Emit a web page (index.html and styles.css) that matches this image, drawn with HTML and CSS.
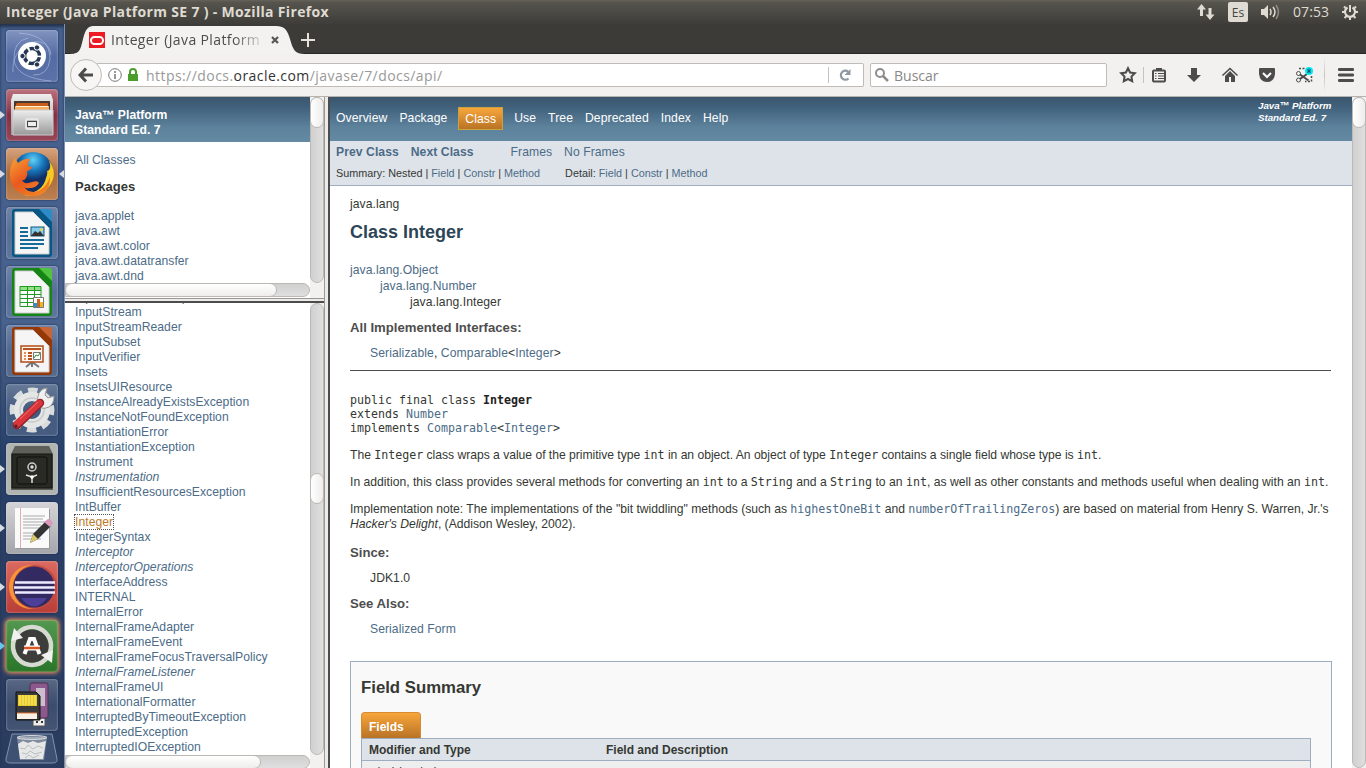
FILE: index.html
```html
<!DOCTYPE html>
<html lang="es">
<head>
<meta charset="utf-8">
<title>Integer (Java Platform SE 7 )</title>
<link rel="stylesheet" href="styles.css">
</head>
<body>
<div class="desktop">
<header class="panel">
  <span class="title">Integer (Java Platform SE 7 ) - Mozilla Firefox</span>
  <div class="tray">
    <svg width="20" height="20" viewBox="0 0 20 20"><path d="M5.500 2 10 7.500H7V14H4V7.500H1zM14 18l-4.500-5.500h3V6h3v6.500h3z" fill="#dfdbd2"/></svg>
    <span class="kbd">Es</span>
    <svg class="vol" width="21" height="20" viewBox="0 0 21 20"><path d="M1 7h3l4-4v14l-4-4H1z" fill="#dfdbd2"/><g fill="none" stroke="#dfdbd2" stroke-width="1.500"><path d="M10 7q2 3 0 6M13 5q4 5 0 10"/><path d="M16 3q5 7 0 14" opacity=".45"/></g></svg>
    <span class="clock">07:53</span>
    <svg class="gear" width="18" height="20" viewBox="0 0 18 20"><g fill="none" stroke="#dfdbd2"><path d="M6.500 5.500a5 5 0 1 0 5 0" stroke-width="2.200"/><path d="M9 3v7" stroke-width="2"/><path d="M4.500 6 3 4.500M13.500 6 15 4.500M4 10H1M14 10h3M5.500 14 3.500 16M12.500 14l2 2M9 15v3" stroke-width="2"/></g></svg>
  </div>
</header>
<div class="workspace">
<nav class="launcher">
  <div class="tile dash"><svg viewBox="0 0 52 52"><g fill="none" stroke="#c4d0ec" opacity=".5"><path d="M7 42C5 10 43 2 45 25M13 3q31 2 31 26Q42 46 27 45M45 51Q10 48 8 30 7 11 22 8"/></g><circle cx="26" cy="26" r="14" fill="#fff"/><circle cx="26" cy="26" r="7.500" fill="none" stroke="#253653" stroke-width="3.500" stroke-dasharray="13.700 2" transform="rotate(10 26 26)"/><g fill="#253653" stroke="#fff"><circle cx="16.500" cy="26" r="2.700"/><circle cx="31" cy="17.500" r="2.700"/><circle cx="31" cy="34.500" r="2.700"/></g></svg></div>
  <div class="tile files run"><svg viewBox="0 0 52 52"><defs><linearGradient id="metal" x2="0" y2="1"><stop stop-color="#eee"/><stop offset="1" stop-color="#999"/></linearGradient></defs><path d="M7 5h38l2 6v35H5V11z" fill="url(#metal)"/><path d="M8 12h36v10H8z" fill="#48392e"/><path d="M11 14h31v8H10v-7z" fill="#c95b1d"/><path d="M9 17h34v4H9z" fill="#f5ae62"/><path d="M10 17h32v1H10z" fill="#fff2d0"/><path d="M7 21h40v25H7z" fill="url(#metal)" stroke="#ccc"/><rect x="20" y="30" width="12" height="10" rx="2" fill="#bbb" stroke="#e6e6e6" stroke-width="2"/><rect x="21.500" y="32.500" width="9" height="5" fill="#eee" stroke="#444"/></svg></div>
  <div class="tile fox run active"><svg viewBox="0 0 52 52"><defs><radialGradient id="globe" cx=".5" cy=".2"><stop stop-color="#60d2fa"/><stop offset=".55" stop-color="#1674b9"/><stop offset="1" stop-color="#112e65"/></radialGradient><linearGradient id="fur" x2=".8" y2="1"><stop stop-color="#f8a136"/><stop offset=".5" stop-color="#e9591f"/><stop offset="1" stop-color="#f38524"/></linearGradient></defs><circle cx="27" cy="24" r="20" fill="url(#globe)"/><path d="M41 10q12 14 3 27-8 13-26 10 19-3 22-17 2-5 1-7 4-1 3-7-1-4-3-6z" fill="#f8ca21"/><path d="M9 10q2 3 3 5 7-5 12-4-2 5-2 7l4 1q-1 3-5 4 1 4-1 7-2 3-4 2 2 5 10 2 6-2 7 1-3 5-9 5-4 1-6-1 6 8 16 3 7-4 10-13Q44 48 27 48 6 47 4 29 3 18 9 10z" fill="url(#fur)"/></svg></div>
  <div class="tile"><svg viewBox="0 0 52 52"><path d="M9 2h29l8 8v37q0 3-3 3H9q-3 0-3-3V5q0-3 3-3z" fill="#075684"/><path d="M33 2h10q3 0 3 3v10z" fill="#2e8bc5"/><path d="M9 5h18l16 16v26H9z" fill="#f5f5f5" stroke="#ccc"/><g stroke="#176b9b" stroke-width="2"><path d="M14 21h8M14 25h8M14 29h8M14 33h24M14 37h24M14 41h18"/></g><rect x="25" y="20" width="13" height="9" fill="#86cce8" stroke="#075684"/><path d="m25 29 4-5 3 2 2-2 4 5z" fill="#333"/><circle cx="35.500" cy="22.500" r="1.500" fill="#f3d447"/></svg></div>
  <div class="tile"><svg viewBox="0 0 52 52"><path d="M9 2h29l8 8v37q0 3-3 3H9q-3 0-3-3V5q0-3 3-3z" fill="#158516"/><path d="M33 2h10q3 0 3 3v10z" fill="#50c43e"/><path d="M9 5h18l16 16v26H9z" fill="#f5f5f5" stroke="#ccc"/><path d="M14 20h21v21H14z" fill="#fff"/><path d="M14 20h21v5H14z" fill="#92e184"/><path d="M14 20.500h21v20H14zM14 24.500h21M14 28.500h21M14 32.500h21M14 36.500h21M21.500 20v21M28.500 20v21" stroke="#1d9b20" fill="none"/><path d="M27.500 31.500h10v10h-10z" fill="#fff" stroke="#777"/><path d="M28 37h3v4h-3z" fill="#2292d0"/><path d="M31 33h3v8h-3z" fill="#cd641c"/><path d="M34 36h3v5h-3z" fill="#efb624"/></svg></div>
  <div class="tile"><svg viewBox="0 0 52 52"><path d="M9 2h29l8 8v37q0 3-3 3H9q-3 0-3-3V5q0-3 3-3z" fill="#943807"/><path d="M33 2h10q3 0 3 3v10z" fill="#c96535"/><path d="M9 5h18l16 16v26H9z" fill="#f5f5f5" stroke="#ccc"/><path d="M20 42l6-5 7 5M26 36v6" stroke="#777" stroke-width="2" fill="none"/><path d="M15 21h22v16H15z" fill="#fff6ed" stroke="#b34b18" stroke-width="1.500"/><path d="M17 24h18M22 28h4M22 31h4M22 34h4" stroke="#ba501d" stroke-width="2"/><path d="M18 28h2M18 31h2M18 34h2" stroke="#e68c57" stroke-width="2"/><path d="M27.500 27.500h7v7h-7z" fill="#fff" stroke="#777"/><path d="m28 33 2-3 2 1 2-3" stroke="#2c8c35" fill="none"/></svg></div>
  <div class="tile"><svg viewBox="0 0 52 52"><circle cx="26" cy="26" r="19" fill="none" stroke="#d9dcdd" stroke-width="7" stroke-dasharray="9 5.920" transform="rotate(-13 26 26)"/><circle cx="26" cy="26" r="13.500" fill="none" stroke="#e4e5e5" stroke-width="9"/><circle cx="26" cy="26" r="12" fill="none" stroke="#c7caca" stroke-width="1.500"/><path d="M33 20q-3-6 0-11 3-5 8-5l-2 7 3 3 6-2q0 8-5 11-4 2-8 1z" fill="#f0f0f0" stroke="#999"/><path d="M34 19 11 41" stroke="#8d2229" stroke-width="8.500" stroke-linecap="round"/><path d="M33.500 19 11 40" stroke="#d9353b" stroke-width="6.500" stroke-linecap="round"/><path d="M32 18 14 35" stroke="#ef7474"/><circle cx="10" cy="42" r="1.500" fill="#5e1c24"/></svg></div>
  <div class="tile safe run"><svg viewBox="0 0 52 52"><path d="m9 3-4 8v36h42V11l-4-8z" fill="#5f5f5a"/><path d="M6 11h40v34H6z" fill="#292924" stroke="#151512"/><rect x="11" y="14" width="30" height="27" rx="2" fill="#2b2b26" stroke="#0e0e0d"/><circle cx="26" cy="24" r="4" fill="none" stroke="#ccc" stroke-width="1.500"/><circle cx="26" cy="24" r="1.700" fill="#ddd"/><path d="m20 32 6 2 5-2M26 34v6" stroke="#ddd" stroke-width="1.500" fill="none"/><circle cx="26" cy="34" r="1.800" fill="#fff"/></svg></div>
  <div class="tile edit run"><svg viewBox="0 0 52 52"><path d="M10 7h34v40H10z" fill="#999"/><path d="M9 6h34v40H9z" fill="#fafafa"/><path d="M14.500 6v40" stroke="#e7acac"/><path d="M17 14h22M17 17h20M17 20h22M17 23h18M17 26h21M17 31h18M17 34h15M17 37h18" stroke="#aaa"/><path d="m24 41 3-9 13-13 5 5-13 13z" fill="#343434"/><path d="m24 41 3-9 5 5z" fill="#d8c86b"/><path d="m38 20 4-3q3 0 5 4l-3 4z" fill="#d899bb"/></svg></div>
  <div class="tile eclipse run"><svg viewBox="0 0 52 52"><circle cx="25" cy="26" r="22" fill="#f59535"/><circle cx="29" cy="26" r="22" fill="#c14b42"/><circle cx="28" cy="26" r="20.500" fill="#332a61"/><path d="M15 37q13 17 26 0z" fill="#4b3f98"/><path d="M9 21.500h40M8 26.500h41M9 31.500h40" stroke="#eeeaff" stroke-width="2.500"/></svg></div>
  <div class="tile update run cyan"><svg viewBox="0 0 52 52"><circle cx="26" cy="26" r="19" fill="none" stroke="#d8d9d3" stroke-width="4.500"/><circle cx="26" cy="26" r="16.500" fill="#3d3e3b"/><path d="m18.500 34 5.500-15h4l5.500 15M20 28h12" fill="none" stroke="#fff" stroke-width="4"/><path d="M18 28h16" stroke="#fff" stroke-width="5"/><path d="M18 28h16" stroke="#dd5725" stroke-width="2.500"/><path d="m5 21 3-13 9 10zM35 35l12-5-1 13z" fill="#f1f1ef"/></svg></div>
  <div class="tile"><svg viewBox="0 0 52 52"><path d="M27 39h12v8H27z" fill="#eee" stroke="#555"/><path d="M30 43h2M35 43h2" stroke="#333" stroke-width="2"/><rect x="24" y="4" width="18" height="35" rx="2" fill="#8c588d" stroke="#4d3251"/><path d="M30 9h9v18h-9z" fill="#ccbdcc"/><path d="M10 13h20l4 4v24H10z" fill="#3a3a3a" stroke="#111"/><path d="M12 16h19v11H12z" fill="#e7cb2e"/><path d="M14 16v10M17 16v10M20 16v10M23 16v10M26 16v10M29 16v10" stroke="#fff175"/><path d="M11 34h20v6H11z" fill="#f8f2e6"/><path d="M11 34h20" stroke="#e37533"/></svg></div>
  <div class="trash"><svg width="58" height="32" viewBox="0 0 58 32"><path d="M9 1h40l5 25q1 4-5 4H8q-6 0-5-4z" fill="#65779b" fill-opacity=".35" stroke="#8190ad"/><path d="M14 4h30l-3 23H17z" fill="#cbd0d3" fill-opacity=".45"/><path d="m15 11 5-3 5 2 5-2 5 2 8-2-3 18H17z" fill="#e5e8e6"/><path d="m17 15 5 1 3-4 5 4 5-3 5 2M19 20l5 1 3-3 5 3 7-2M22 25l4-3 4 3 6-3" fill="none" stroke="#b9bebf"/><ellipse cx="29" cy="4.500" rx="15" ry="2" fill="#ddd" fill-opacity=".4" stroke="#d5dadd"/></svg></div>
</nav>
<main class="browser">
  <div class="tabs">
    <svg class="tabshape" width="240" height="30" viewBox="0 0 240 30"><path d="M0 30c12 0 12-3 15-15C18 4 20 2 27 2h181c8 0 11 3 14 13 3 11 5 15 15 15z" fill="#f3f2f1"/></svg>
    <div class="tabtext"><svg width="16" height="16" viewBox="0 0 16 16"><path fill="#ed1c24" d="M0 0h16v16H0z"/><rect x="2" y="5" width="12" height="7" rx="3.500" fill="none" stroke="#fff" stroke-width="2"/></svg><span class="tabname">Integer (Java Platform</span><svg class="close" width="8" height="8" viewBox="0 0 8 8"><path d="m1 1 6 6M7 1 1 7" stroke="#555" stroke-width="2.200"/></svg></div>
    <svg class="plus" width="14" height="14" viewBox="0 0 14 14"><path d="M7 0v14M0 7h14" stroke="#e5e2d9" stroke-width="2"/></svg>
  </div>
  <div class="toolbar">
    <div class="back"><svg width="16" height="16" viewBox="0 0 16 16"><path d="m8 1.500-6 6.500 6 6.500M2 8h13" fill="none" stroke="#4c4c4c" stroke-width="3"/></svg></div>
    <div class="url"><svg width="14" height="14" viewBox="0 0 14 14"><circle cx="7" cy="7" r="6.300" fill="none" stroke="#777"/><path d="M7 6v5M7 3v2" stroke="#777" stroke-width="1.500"/></svg><svg width="10" height="14" viewBox="0 0 10 14"><path d="M2 7V4q0-3 3-3t3 3v3" fill="none" stroke="#4b9d2c" stroke-width="2"/><path d="M0 6h10v7H0z" fill="#4b9d2c"/></svg><span class="address">https://docs.<b>oracle.com</b>/javase/7/docs/api/</span><i class="sep"></i><svg class="reload" width="12" height="14" viewBox="0 0 12 14"><path d="M9.500 10.500a4.500 4.500 0 1 1-.5-7" fill="none" stroke="#8e99a3" stroke-width="2.300"/><path d="M11.500 1v6h-6z" fill="#8e99a3"/></svg></div>
    <div class="search"><svg width="14" height="14" viewBox="0 0 14 14"><circle cx="5" cy="5" r="4" fill="none" stroke="#8d8d8d" stroke-width="2"/><path d="m8 8 5 5" stroke="#8d8d8d" stroke-width="2.500"/></svg><span>Buscar</span></div>
    <div class="actions">
      <svg width="18" height="18" viewBox="0 0 18 18"><path d="m9 2.200 2.100 4.300 4.700.7-3.400 3.300.8 4.700L9 13l-4.200 2.200.8-4.700-3.400-3.300 4.700-.7z" fill="none" stroke="#4c4c4c" stroke-width="2"/></svg>
      <i class="sep"></i>
      <svg width="16" height="18" viewBox="0 0 16 18"><path d="M5 4V2h6v2z" fill="#4c4c4c"/><rect x="2" y="4.500" width="12" height="11" rx="1" fill="none" stroke="#4c4c4c" stroke-width="2"/><path d="M4 7.500h1.500M7 7.500h6M4 10h1.500M7 10h6M4 12.500h1.500M7 12.500h6" stroke="#4c4c4c"/></svg>
      <svg width="16" height="18" viewBox="0 0 16 18"><path d="M5 2h6v7h4l-7 7-7-7h4z" fill="#4c4c4c"/></svg>
      <svg width="18" height="18" viewBox="0 0 18 18"><path d="m1.500 9.500 7.500-7 7.500 7" fill="none" stroke="#4c4c4c" stroke-width="1.600"/><path d="m4 10 5-5 5 5v6h-4v-5H8v5H4z" fill="#4c4c4c"/></svg>
      <svg width="18" height="18" viewBox="0 0 18 18"><path d="M1 3q0-1 1-1h14q1 0 1 1v5q-1 8-8 8T1 8z" fill="#4c4c4c"/><path d="m5 7 4 4 4-4" fill="none" stroke="#fff" stroke-width="2"/></svg>
      <svg width="18" height="18" viewBox="0 0 18 18"><path d="M4 2.500h7M16.500 10v5.500H10" fill="none" stroke="#4c4c4c" stroke-width="1.500" stroke-dasharray="2 1.500"/><path d="M5 8.500l8.500 6M5 13l7-5" stroke="#4c4c4c" stroke-width="2"/><circle cx="3.500" cy="7.500" r="2" fill="none" stroke="#4c4c4c"/><circle cx="3.500" cy="14" r="2" fill="none" stroke="#4c4c4c"/><circle cx="14" cy="5" r="4" fill="#00e9f4"/><path d="M14 2.500v5M12 3.500l4 3M16 3.500l-4 3" stroke="#174e60"/></svg>
    </div>
    <i class="divider"></i>
    <svg class="menu" width="16" height="14" viewBox="0 0 16 14"><path d="M1.200 1.500h13.600M1.200 7h13.600M1.200 12.500h13.600" stroke="#4c4c4c" stroke-width="2.800" stroke-linecap="round"/></svg>
  </div>
  <div class="frames">
    <section class="left">
      <div class="packages">
        <div class="framebody">
          <div class="brand">Java™ Platform<br>Standard Ed. 7</div>
          <div class="pkg"><a class="all">All Classes</a><h2>Packages</h2><a>java.applet</a><a>java.awt</a><a>java.awt.color</a><a>java.awt.datatransfer</a><a>java.awt.dnd</a></div>
          <div class="hbar"><div class="thumb first"></div></div>
        </div>
        <div class="vcol"><div class="vbar"><div class="thumb topthumb"></div></div></div>
      </div>
      <div class="hsplit"></div>
      <div class="classes">
        <div class="framebody">
          <div class="classlist"><a class="sliver">InputMismatchException</a><a>InputStream</a><a>InputStreamReader</a><a>InputSubset</a><a>InputVerifier</a><a>Insets</a><a>InsetsUIResource</a><a>InstanceAlreadyExistsException</a><a>InstanceNotFoundException</a><a>InstantiationError</a><a>InstantiationException</a><a>Instrument</a><a><em>Instrumentation</em></a><a>InsufficientResourcesException</a><a>IntBuffer</a><a><span class="selected">Integer</span></a><a>IntegerSyntax</a><a><em>Interceptor</em></a><a><em>InterceptorOperations</em></a><a>InterfaceAddress</a><a>INTERNAL</a><a>InternalError</a><a>InternalFrameAdapter</a><a>InternalFrameEvent</a><a>InternalFrameFocusTraversalPolicy</a><a><em>InternalFrameListener</em></a><a>InternalFrameUI</a><a>InternationalFormatter</a><a>InterruptedByTimeoutException</a><a>InterruptedException</a><a>InterruptedIOException</a></div>
          <div class="hbar"><div class="thumb second"></div></div>
        </div>
        <div class="vcol"><div class="vbar lower"><div class="thumb midthumb"></div></div></div>
      </div>
    </section>
    <div class="vsplit"></div>
    <section class="doc">
      <div class="topnav"><ul><li>Overview</li><li>Package</li><li class="current">Class</li><li>Use</li><li>Tree</li><li>Deprecated</li><li>Index</li><li>Help</li></ul><div class="about">Java™ Platform<br>Standard Ed. 7</div></div>
      <div class="subnav"><div class="links"><b>Prev Class</b><b>Next Class</b><a class="frameslink">Frames</a><a>No Frames</a></div><div class="details"><span>Summary: Nested | <a>Field</a> | <a>Constr</a> | <a>Method</a></span><span>Detail: <a>Field</a> | <a>Constr</a> | <a>Method</a></span></div></div>
      <article>
        <div class="package">java.lang</div>
        <h1>Class Integer</h1>
        <div class="tree"><div><a>java.lang.Object</a></div><div><a>java.lang.Number</a></div><div>java.lang.Integer</div></div>
        <h3 class="impl">All Implemented Interfaces:</h3>
        <div class="def interfaces"><a>Serializable</a>, <a>Comparable</a>&lt;<a>Integer</a>&gt;</div>
        <hr>
        <pre>public final class <b>Integer</b>
extends <a>Number</a>
implements <a>Comparable</a>&lt;<a>Integer</a>&gt;</pre>
        <p class="lead">The <code>Integer</code> class wraps a value of the primitive type <code>int</code> in an object. An object of type <code>Integer</code> contains a single field whose type is <code>int</code>.</p>
        <p>In addition, this class provides several methods for converting an <code>int</code> to a <code>String</code> and a <code>String</code> to an <code>int</code>, as well as other constants and methods useful when dealing with an <code>int</code>.</p>
        <p class="note">Implementation note: The implementations of the "bit twiddling" methods (such as <a><code>highestOneBit</code></a> and <a><code>numberOfTrailingZeros</code></a>) are based on material from Henry S. Warren, Jr.'s<br><em>Hacker's Delight</em>, (Addison Wesley, 2002).</p>
        <h3 class="since">Since:</h3><div class="def">JDK1.0</div>
        <h3 class="see">See Also:</h3><div class="def"><a>Serialized Form</a></div>
        <div class="summary"><h2>Field Summary</h2><div class="caption">Fields</div><div class="table"><div class="row head"><span>Modifier and Type</span><span>Field and Description</span></div><div class="row value"><code>static int</code><a><code><b>MAX_VALUE</b></code></a></div></div></div>
      </article>
    </section>
    <div class="vcol right"><div class="vbar full"><div class="thumb topthumb"></div></div></div>
  </div>
</main>
</div>
</div>
</body>
</html>
```
FILE: styles.css
```css
* { box-sizing: border-box; }
body { margin: 0; font-family: "Liberation Sans", Arial, sans-serif; font-size: 12.16px; color: #353833; overflow: hidden; }
a { color: #4c6b87; }
h1, h2, h3, p, ul, pre { margin: 0; padding: 0; }
svg { display: block; flex: none; }
.desktop { width: 1366px; height: 768px; overflow: hidden; display: flex; flex-direction: column; }
.panel { height: 24px; flex: none; display: flex; align-items: center; justify-content: space-between; background: linear-gradient(#66635a, #56544d 10%, #3e3d39); color: #dfdbd2; font-family: "Open Sans", "Noto Sans", sans-serif; font-size: 14px; padding-left: 6px; }
.title { font-weight: 700; white-space: nowrap; letter-spacing: .33px; margin-top: -2px; }
.tray { display: flex; align-items: center; height: 24px; width: 170px; }
.kbd { background: #dfdbd2; color: #444; border-radius: 2px; height: 20px; width: 20px; margin-left: 12px; font-size: 12px; line-height: 21px; text-align: center; }
.vol { margin-left: 12px; }
.clock { margin-left: 12px; width: 37px; letter-spacing: .1px; margin-top: -2px; }
.gear { margin-left: 11px; }
.workspace { flex: 1; min-height: 0; display: flex; }
.launcher { width: 65px; flex: none; padding: 6px 0 0 6px; display: flex; flex-direction: column; gap: 7px; background: linear-gradient(#46608f 0, #48628e 40%, #3d557d 48%, #26406a 58%, #2b3e64 75%, #2a3c5f); border-right: 1px solid #7c91b5; box-shadow: inset 0 3px 3px #25354f; }
.tile { width: 52px; height: 52px; flex: none; border-radius: 4px; background: linear-gradient(#ffffff38, #ffffff14 50%, #ffffff20); box-shadow: inset 0 0 2px #dbe4f5b0, 0 0 2px #15233d; position: relative; }
.dash { background: linear-gradient(#8294c0, #536ba3 50%, #5c72a9); }
.files { background: linear-gradient(#bd737f, #822f42 50%, #984759); }
.fox { background: linear-gradient(#d7a37e, #a96b3a 50%, #bd8050); }
.safe { background: #b1b5b1; }
.edit { background: linear-gradient(#d4d4d8, #a4a5aa); }
.eclipse { background: linear-gradient(#dc6a61, #b83e37); }
.update { background: linear-gradient(#549852, #287529); box-shadow: 0 0 4px 1px #ff9c5c, inset 0 0 2px #ffc18e; }
.run::before { content: ""; position: absolute; left: -6px; top: 22px; border: 4px solid transparent; border-left: 5px solid #d8dbe0; border-right: 0; }
.run.cyan::before { border-left-color: #63c8ed; }
.active::after { content: ""; position: absolute; right: -6px; top: 22px; border: 4px solid transparent; border-right: 5px solid #d8dbe0; border-left: 0; }
.trash { margin: -5px 0 0 -3px; }
.browser { flex: 1; min-width: 0; display: flex; flex-direction: column; }
.tabs { height: 30px; flex: none; background: #3c3b37; display: flex; border-bottom: 1px solid #282723; }
.tabshape { margin-left: 3px; }
.tabtext { margin-left: -219px; width: 219px; display: flex; align-items: center; padding-top: 2px; font: 14px "Open Sans", "Noto Sans", sans-serif; color: #4c4c4c; position: relative; }
.tabname { width: 153px; margin-left: 6px; letter-spacing: .38px; white-space: nowrap; -webkit-mask-image: linear-gradient(90deg, #000 80%, transparent 102%); mask-image: linear-gradient(90deg, #000 80%, transparent 102%); }
.close { margin-left: 7px; }
.plus { margin: 9px 0 0 -7px; }
.toolbar { height: 43px; flex: none; background: #f2f1f0; border-bottom: 1px solid #b7b3ae; display: flex; align-items: center; }
.back { width: 32px; height: 32px; border: 1px solid #bfbcb8; border-radius: 50%; background: #f7f6f5; display: flex; align-items: center; justify-content: center; margin-left: 5px; z-index: 1; flex: none; }
.url { width: 768px; flex: none; height: 24px; margin-left: -6px; border: 1px solid #bfbcb8; border-left: 0; background: #fff; display: flex; align-items: center; padding-left: 12px; gap: 6px; font: 14px "Open Sans", "Noto Sans", sans-serif; color: #999; border-radius: 2px; }
.address { width: 676px; margin-left: 2px; white-space: nowrap; letter-spacing: .44px; }
.address b { font-weight: 400; color: #333; }
.sep { width: 1px; height: 16px; background: #c6c3bf; flex: none; }
.reload { margin-left: 4px; }
.search { width: 237px; flex: none; height: 24px; margin-left: 6px; border: 1px solid #bfbcb8; background: #fff; border-radius: 2px; display: flex; align-items: center; padding-left: 4px; gap: 5px; color: #888; font: 14px "Open Sans", "Noto Sans", sans-serif; }
.actions { display: flex; margin-left: 12px; align-items: center; }
.actions .sep { margin: 0 7px 0 6px; }
.actions svg + svg { margin-left: 19px; }
.divider { width: 1px; height: 36px; background: linear-gradient(transparent, #c6c3bf, transparent); margin-left: 11px; }
.menu { margin-left: 13px; }
.frames { flex: 1; min-height: 0; display: flex; }
.left { width: 259px; flex: none; display: flex; flex-direction: column; }
.packages { height: 201px; display: flex; flex: none; }
.framebody { width: 245px; display: flex; flex-direction: column; letter-spacing: .04px; }
.brand { height: 45px; flex: none; padding: 11px 10px 0; line-height: 15px; font-weight: 700; color: #fff; background: linear-gradient(#3b566c, #40607b 22%, #5d829c 68%, #6389a3); }
.pkg { height: 141px; padding: 11px 10px 0; line-height: 15px; overflow: hidden; }
.pkg a, .classlist a { display: block; white-space: nowrap; }
.pkg h2 { font-size: 13px; margin: 11px 0 14px; line-height: 16px; }
.hbar { height: 14px; flex: none; background: linear-gradient(#d0d0d0, #dfdfdf); border: 1px solid #bcb9b5; border-radius: 0 7px 7px 0; }
.thumb { background: linear-gradient(90deg, #fff, #eeedec); border: 1px solid #bcb9b5; border-radius: 7px; }
.first, .second { height: 14px; margin: -1px; background: linear-gradient(#fff, #eeedec); }
.first { width: 212px; }
.second { width: 196px; }
.vcol { width: 14px; background: #f2f1f0; flex: none; }
.vbar { height: 186px; border: 1px solid #bcb9b5; border-radius: 7px; background: linear-gradient(90deg, #d0d0d0, #dfdfdf); }
.full { height: 671px; }
.topthumb { height: 31px; margin: -1px; }
.hsplit { height: 5px; flex: none; border-top: 1px solid #9b9894; border-bottom: 2px solid #4c4c4c; background: #edebea; }
.classes { flex: 1; min-height: 0; display: flex; }
.classlist { height: 452px; flex: none; padding: 0 10px; line-height: 15px; overflow: hidden; }
.classlist .sliver { margin-top: -13px; height: 15px; margin-bottom: 0; }
.selected { color: #bb7a2a; outline: 1px dotted #555; }
.lower { height: 452px; padding-top: 169px; }
.midthumb { height: 31px; margin: 0 -1px; }
.vsplit { width: 6px; flex: none; background: #edebea; border-left: 1px solid #9b9894; border-right: 2px solid #4c4c4c; }
.doc { width: 1022px; flex: none; overflow: hidden; }
.topnav { height: 44px; background: linear-gradient(#3b566c, #40607b 22%, #5d829c 68%, #6389a3); color: #fff; display: flex; justify-content: space-between; }
.topnav ul { display: flex; list-style: none; padding: 14px 0 0 6px; gap: 12px; line-height: 15px; letter-spacing: .09px; }
.current { height: 23px; margin: -4px -1px 0; padding: 3px 6px; background: linear-gradient(#f8a63c, #b97325); border: 1px solid #c9a33b; }
.topnav .current { line-height: 16px; }
.about { width: 94px; padding-top: 3px; font-size: 9.730px; font-weight: 700; font-style: italic; line-height: 12px; white-space: nowrap; }
.subnav { height: 45px; background: #dee3e9; border-bottom: 1px solid #9eadc0; padding: 4px 6px 0; }
.links { display: flex; gap: 12px; line-height: 14px; color: #4c6b87; letter-spacing: .06px; }
.frameslink { margin-left: 25px; }
.details { display: flex; gap: 25px; font-size: 10.800px; line-height: 14px; margin-top: 7px; }
article { padding: 10px 20px 0; line-height: 15px; }
.package { height: 16px; line-height: 16px; letter-spacing: .08px; }
h1 { color: #2c4557; font-size: 18px; line-height: 20px; margin-top: 10px; }
.tree { line-height: 16px; margin-top: 20px; letter-spacing: .07px; }
.tree div:nth-child(2) { margin-left: 30px; }
.tree div:nth-child(3) { margin-left: 60px; }
h3 { font-size: 13.150px; line-height: 16px; color: #4e4e4e; }
.impl { margin-top: 10px; }
.def { margin: 9px 0 0 20px; line-height: 16px; letter-spacing: .05px; }
.interfaces { letter-spacing: .09px; }
hr { border: 0; border-top: 1px solid #4b4b4b; margin: 9px 1px 22px 0; }
pre, code { font-family: "DejaVu Sans Mono", monospace; font-size: 11.630px; letter-spacing: 0; }
pre { line-height: 14px; }
pre b { color: #222; }
p { margin-top: 12px; line-height: 15px; white-space: nowrap; letter-spacing: .01px; }
code { line-height: 12px; }
.lead { margin-top: 13px; letter-spacing: -.03px; }
.note { letter-spacing: -.015px; }
.since { margin-top: 13px; }
.see { margin-top: 10px; }
.summary { height: 130px; margin-top: 24px; border: 1px solid #9eadc0; background: #f9f9f9; padding: 16px 20px 0 10px; }
.summary h2 { font-size: 16.750px; line-height: 20px; }
.caption { margin-top: 14px; width: 60px; height: 26px; border-radius: 4px 4px 0 0; padding: 7px 7px 0; background: linear-gradient(#f8a63c, #b97325); border: 1px solid #d68a31; border-bottom: 0; color: #fff; font-weight: 700; font-size: 12px; line-height: 15px; }
.table { border: 1px solid #9eadc0; }
.row { display: flex; padding: 0 7px; }
.row > :first-child { width: 237px; }
.head { height: 22px; line-height: 22px; background: #dee3e9; border-bottom: 1px solid #9eadc0; font-weight: 700; font-size: 12px; }
.value { height: 30px; background: #eeeeef; padding-top: 5px; }
```
